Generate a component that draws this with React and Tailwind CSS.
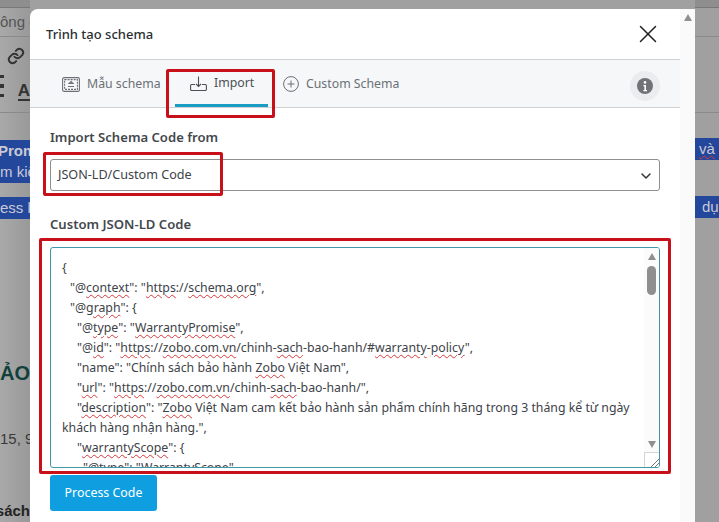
import React from 'react';
import { X, ChevronDown } from 'lucide-react';

const font = 'font-["Noto_Sans",sans-serif]';
const pageFont = 'font-["Liberation_Sans",sans-serif]';

// từ bị gạch đỏ kiểm tra chính tả
function W({ children }) {
  return <span className="underline decoration-wavy decoration-[#d9383a] decoration-1 underline-offset-2">{children}</span>;
}

function BannerIcon() {
  return (
    <svg width="18" height="15" viewBox="0 0 18 15" fill="none" stroke="#6b7075" strokeWidth="1.1">
      <rect x="0.6" y="0.6" width="16.8" height="13.8" rx="1.5" />
      <rect x="2.6" y="2.6" width="12.8" height="9.8" strokeDasharray="2 1" />
      <path d="M9 4.5l2 2H7zM6 9.5h6" />
    </svg>
  );
}

function ImportIcon() {
  return (
    <svg width="17" height="15" viewBox="0 0 17 15" fill="none" stroke="#4b5055" strokeWidth="1.1">
      <path d="M5 8.5H1.6a1 1 0 0 0-1 1v4a1 1 0 0 0 1 1h13.8a1 1 0 0 0 1-1v-4a1 1 0 0 0-1-1H12" />
      <path d="M8.5 0.5v10M6 8l2.5 2.5L11 8" />
    </svg>
  );
}

function PlusIcon() {
  return (
    <svg width="16" height="16" viewBox="0 0 16 16" fill="none" stroke="#6b7075" strokeWidth="1">
      <circle cx="8" cy="8" r="7.4" />
      <path d="M8 4.5v7M4.5 8h7" />
    </svg>
  );
}

function InfoIcon() {
  return (
    <svg width="16" height="16" viewBox="0 0 16 16">
      <circle cx="8" cy="8" r="8" fill="#6f7378" />
      <circle cx="8" cy="4.4" r="1.3" fill="#fff" />
      <path d="M6.4 7h2.6v5h1v1.2H6.4V12h1V8.2h-1z" fill="#fff" />
    </svg>
  );
}

function ArrowUp() {
  return <div className="w-0 h-0 border-x-[4.5px] border-x-transparent border-b-[7px] border-b-[#8f8f8f]" />;
}

function ArrowDown() {
  return <div className="w-0 h-0 border-x-[4.5px] border-x-transparent border-t-[7px] border-t-[#8f8f8f]" />;
}

function LeftStrip() {
  return (
    <div className={`w-[30px] h-[522px] shrink-0 flex flex-col overflow-hidden bg-gradient-to-r from-[#a9a9a9] to-[#999999] ${pageFont}`}>
      <div className="h-[8px] shrink-0 bg-[#8e8e8e] border-b border-[#777]" />
      <div className="h-[29px] shrink-0 border-b border-[#8a8a8a] flex items-center">
        <span className="text-[15px] text-[#555] whitespace-nowrap">ông c</span>
      </div>
      <div className="h-[76px] shrink-0 border-b border-[#8a8a8a] flex flex-col">
        <div className="h-[38px] shrink-0 flex items-center pl-[7px]">
          <svg width="18" height="18" viewBox="0 0 24 24" fill="none" stroke="#333" strokeWidth="2.6" strokeLinecap="round">
            <path d="M10 13a5 5 0 0 0 7.5.5l3-3a5 5 0 0 0-7-7l-1.7 1.7" />
            <path d="M14 11a5 5 0 0 0-7.5-.5l-3 3a5 5 0 0 0 7 7l1.7-1.7" />
          </svg>
        </div>
        <div className="flex items-start gap-[14px]">
          <div className="flex flex-col gap-[6px] w-[6px]">
            <div className="h-[3px] bg-[#333]" />
            <div className="h-[4px] bg-[#333]" />
            <div className="h-[3px] bg-[#333]" />
          </div>
          <span className="mt-[8px] text-[17px] leading-[16px] font-bold text-[#333] border-b-2 border-[#333]">A</span>
        </div>
      </div>
      <div className="h-[27px] shrink-0" />
      <div className="h-[43px] shrink-0 bg-[#23479a] text-[#c9c9d6] text-[15px] leading-[21px] whitespace-nowrap">
        <div className="font-bold -ml-[2px]">Prom</div>
        <div>m kiế</div>
      </div>
      <div className="h-[14px] shrink-0" />
      <div className="h-[22px] shrink-0 bg-[#23479a] text-[#c9c9d6] text-[15px] leading-[22px] whitespace-nowrap">ess k</div>
      <div className="h-[142px] shrink-0" />
      <div className="h-[24px] shrink-0 text-[#12403a] text-[20px] leading-[24px] font-bold whitespace-nowrap">ẢO</div>
      <div className="h-[44px] shrink-0" />
      <div className="h-[20px] shrink-0 text-[#3a3a3a] text-[15px] leading-[20px] whitespace-nowrap">15, 9</div>
      <div className="h-[52px] shrink-0" />
      <div className="h-[20px] shrink-0 text-[#222] text-[15px] leading-[20px] font-bold whitespace-nowrap flex justify-end">sách</div>
    </div>
  );
}

function RightStrip() {
  return (
    <div className={`w-[24px] h-[522px] shrink-0 flex flex-col overflow-hidden bg-[#a0a0a0] ${pageFont}`}>
      <div className="h-[8px] shrink-0 bg-[#8e8e8e] border-b border-[#777]" />
      <div className="h-[29px] shrink-0 border-b border-[#8a8a8a]" />
      <div className="h-[76px] shrink-0 border-b border-[#8a8a8a]" />
      <div className="h-[25px] shrink-0" />
      <div className="h-[22px] shrink-0 bg-[#23479a] text-[#c9c9d6] text-[15px] leading-[22px] pl-[4px]">
        <span className="underline decoration-wavy decoration-[#d9383a] decoration-1">và</span>
      </div>
      <div className="h-[36px] shrink-0" />
      <div className="h-[22px] shrink-0 bg-[#23479a] text-[#c9c9d6] text-[15px] leading-[22px] pl-[7px] whitespace-nowrap">dụ</div>
    </div>
  );
}

function Tabs() {
  return (
    <div className="h-[49px] shrink-0 bg-[#f6f7f9] border-y border-[#cfd2d5] flex items-stretch pl-[32px] pr-[20px]">
      <div className="flex items-center gap-[7px] w-[113px] pt-[1px] text-[12.3px] text-[#6b7075]">
        <BannerIcon />
        <span>Mẫu schema</span>
      </div>
      <div className="flex items-center gap-[7px] w-[93px] pl-[15px] pt-[3px] text-[12.3px] text-[#4b5055] border-b-[3px] border-[#1a9cc4]">
        <ImportIcon />
        <span>Import</span>
      </div>
      <div className="flex items-center gap-[7px] pl-[15px] pt-[1px] text-[12.3px] text-[#6b7075]">
        <PlusIcon />
        <span>Custom Schema</span>
      </div>
      <div className="ml-auto self-center mt-[5px] w-[30px] h-[30px] rounded-full bg-[#eaecee] flex items-center justify-center">
        <InfoIcon />
      </div>
    </div>
  );
}

function CodeBox() {
  return (
    <div className="w-[610px] h-[221px] mt-[14px] border border-[#3f97a8] rounded-[3px] bg-white flex overflow-hidden relative">
      <div className="flex-1 pl-[11px] pt-[10px] text-[12.3px] leading-[20px] text-[#3d4248] whitespace-pre-wrap overflow-hidden">
        <div>{'{'}</div>
        <div><span className="inline-block w-[8px]" />{'"@'}<W>context</W>{'": "'}<W>https</W>{'://'}<W>schema.org</W>{'",'}</div>
        <div><span className="inline-block w-[8px]" />{'"@'}<W>graph</W>{'": {'}</div>
        <div><span className="inline-block w-[15px]" />{'"@'}<W>type</W>{'": "'}<W>WarrantyPromise</W>{'",'}</div>
        <div><span className="inline-block w-[15px]" />{'"@'}<W>id</W>{'": "'}<W>https</W>{'://'}<W>zobo.com.vn</W>{'/chinh-'}<W>sach</W>{'-bao-hanh/#'}<W>warranty</W>{'-'}<W>policy</W>{'",'}</div>
        <div><span className="inline-block w-[15px]" />{'"name": "Chính sách bảo hành '}<W>Zobo</W>{' Việt Nam",'}</div>
        <div><span className="inline-block w-[15px]" />{'"'}<W>url</W>{'": "'}<W>https</W>{'://'}<W>zobo.com.vn</W>{'/chinh-'}<W>sach</W>{'-bao-hanh/",'}</div>
        <div><span className="inline-block w-[15px]" />{'"'}<W>description</W>{'": "'}<W>Zobo</W>{' Việt Nam cam kết bảo hành sản phẩm chính hãng trong 3 tháng kể từ ngày khách hàng nhận hàng.",'}</div>
        <div><span className="inline-block w-[15px]" />{'"'}<W>warrantyScope</W>{'": {'}</div>
        <div><span className="inline-block w-[21px]" />{'"@'}<W>type</W>{'": "'}<W>WarrantyScope</W>{'"'}</div>
      </div>
      <div className="w-[15px] shrink-0 bg-[#fbfbfb] flex flex-col items-center pt-[5px]">
        <ArrowUp />
        <div className="w-[9px] h-[29px] mt-[6px] rounded-full bg-[#8f8f8f]" />
        <div className="mt-auto mb-[19px]">
          <ArrowDown />
        </div>
      </div>
      <div className="absolute right-0 bottom-0 w-[15px] h-[15px] bg-white border-l border-t border-[#d5d5d5] overflow-hidden">
        <svg width="14" height="14" viewBox="0 0 14 14" stroke="#777" strokeWidth="1">
          <path d="M6 14L14 6M10 14l4-4" />
        </svg>
      </div>
    </div>
  );
}

export default function App() {
  return (
    <div className="flex h-[522px] w-[719px] overflow-hidden bg-[#a0a0a0]">
      <LeftStrip />
      <div className={`w-[665px] h-[513px] mt-[9px] shrink-0 flex bg-white rounded-tl-lg overflow-hidden ${font}`}>
        <div className="w-[650px] flex flex-col relative">
          <div className="h-[50px] shrink-0 flex items-center justify-between pl-[16px] pr-[17px]">
            <span className="text-[13px] font-medium text-[#2b2f33] pt-[2px]">Trình tạo schema</span>
            <X size={30} strokeWidth={1.2} className="text-[#222]" />
          </div>
          <Tabs />
          <div className="pl-[20px] flex flex-col flex-1">
            <div className="mt-[20px] text-[13.1px] leading-[18px] font-semibold text-[#44484d]">Import Schema Code from</div>
            <div className="w-[610px] h-[32px] mt-[13px] border border-[#8f8f8f] rounded-[3px] flex items-center justify-between pl-[7px] pr-[5px] pt-[1px] text-[12.6px] text-[#3d4248]">
              <span>JSON-LD/Custom Code</span>
              <ChevronDown size={16} strokeWidth={2.2} className="text-[#333]" />
            </div>
            <div className="mt-[24px] text-[13.1px] leading-[18px] font-semibold text-[#44484d]">Custom JSON-LD Code</div>
            <CodeBox />
            <div className="w-[107px] h-[36px] mt-[7px] rounded-[3px] bg-[#0f9fe0] text-white text-[12.4px] flex items-center justify-center">Process Code</div>
          </div>
          {/* khung đỏ chú thích */}
          <div className="absolute left-[136px] top-[60px] w-[109px] h-[49px] border-[3px] border-[#c8101a] rounded-[2px]" />
          <div className="absolute left-[13px] top-[143px] w-[180px] h-[44px] border-[3px] border-[#c8101a] rounded-[2px]" />
          <div className="absolute left-[9px] top-[229px] w-[632px] h-[236px] border-[3px] border-[#c8101a] rounded-[2px]" />
        </div>
        <div className="w-[15px] shrink-0 bg-[#fafafa] flex justify-center pt-[5px]">
          <ArrowUp />
        </div>
      </div>
      <RightStrip />
    </div>
  );
}
